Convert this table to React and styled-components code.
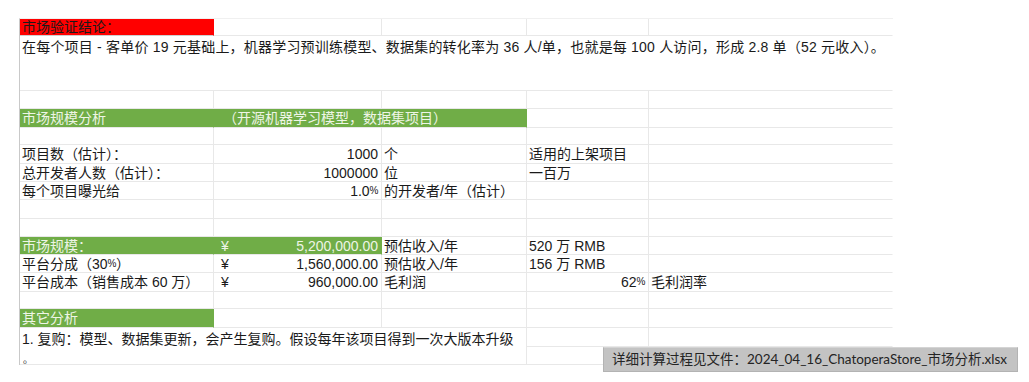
import React from "react";
import styled, { createGlobalStyle } from "styled-components";

const GlobalStyle = createGlobalStyle`
  html, body {
    margin: 0;
    padding: 0;
    background: #ffffff;
  }
  body {
    font-family: "Liberation Sans", "Noto Sans CJK SC", sans-serif;
  }
`;

const ROWS = [17, 55, 18, 19, 17, 19, 18, 18, 19, 18, 18, 18, 19, 17, 19, 19, 18];
const COLS = [194, 168, 145, 122, 244];

const fills = {
  red: "#ff0000",
  green: "#70ad47",
};

function App() {
  return (
    <>
      <GlobalStyle />
      <Page>
        <Sheet>
          {/* row 1 */}
          <Cell fill="red">市场验证结论：</Cell>
          <Cell />
          <Cell />
          <Cell />
          <Cell edge />

          {/* row 2 */}
          <Cell span={5} top edge spacing={0.2}>
            在每个项目 - 客单价 19 元基础上，机器学习预训练模型、数据集的转化率为 36 人/单，也就是每 100 人访问，形成 2.8 单（52 元收入）。
          </Cell>

          {/* row 3 */}
          <Cell />
          <Cell />
          <Cell />
          <Cell />
          <Cell edge />

          {/* row 4 */}
          <Cell fill="green">市场规模分析</Cell>
          <Cell fill="green" span={2} indent={9}>
            （开源机器学习模型，数据集项目）
          </Cell>
          <Cell />
          <Cell edge />

          {/* row 5 */}
          <Cell />
          <Cell />
          <Cell />
          <Cell />
          <Cell edge />

          {/* row 6 */}
          <Cell>项目数（估计）：</Cell>
          <Cell right>1000</Cell>
          <Cell>个</Cell>
          <Cell>适用的上架项目</Cell>
          <Cell edge />

          {/* row 7 */}
          <Cell>总开发者人数（估计）：</Cell>
          <Cell right>1000000</Cell>
          <Cell>位</Cell>
          <Cell>一百万</Cell>
          <Cell edge />

          {/* row 8 */}
          <Cell>每个项目曝光给</Cell>
          <Cell right>
            1.0<Pct>%</Pct>
          </Cell>
          <Cell>的开发者/年（估计）</Cell>
          <Cell />
          <Cell edge />

          {/* rows 9, 10 */}
          <Cell />
          <Cell />
          <Cell />
          <Cell />
          <Cell edge />
          <Cell />
          <Cell />
          <Cell />
          <Cell />
          <Cell edge />

          {/* row 11 */}
          <Cell fill="green">市场规模：</Cell>
          <Money fill="green">
            <span>¥</span>
            <span>5,200,000.00</span>
          </Money>
          <Cell>预估收入/年</Cell>
          <Cell>520 万 RMB</Cell>
          <Cell edge />

          {/* row 12 */}
          <Cell>
            平台分成（30<Pct>%</Pct>）
          </Cell>
          <Money>
            <span>¥</span>
            <span>1,560,000.00</span>
          </Money>
          <Cell>预估收入/年</Cell>
          <Cell>156 万 RMB</Cell>
          <Cell edge />

          {/* row 13 */}
          <Cell>平台成本（销售成本 60 万）</Cell>
          <Money>
            <span>¥</span>
            <span>960,000.00</span>
          </Money>
          <Cell>毛利润</Cell>
          <Cell right>
            62<Pct>%</Pct>
          </Cell>
          <Cell edge>毛利润率</Cell>

          {/* row 14 */}
          <Cell />
          <Cell />
          <Cell />
          <Cell />
          <Cell edge />

          {/* row 15 */}
          <Cell fill="green">其它分析</Cell>
          <Cell />
          <Cell />
          <Cell />
          <Cell edge />

          {/* rows 16-17, merged A:C */}
          <Cell span={3} rows={2} top>
            1. 复购：模型、数据集更新，会产生复购。假设每年该项目得到一次大版本升级
            <br />
            <Small>。</Small>
          </Cell>
          <Cell />
          <Cell edge />
          <Cell />
          <Cell edge />
        </Sheet>

        <Tip>详细计算过程见文件：2024_04_16_ChatoperaStore_市场分析.xlsx</Tip>
      </Page>
    </>
  );
}

export default App;

const Page = styled.div`
  position: relative;
  width: 1029px;
  height: 382px;
  padding: 19px 0 0 19px;
  box-sizing: border-box;
  overflow: hidden;
`;

const Sheet = styled.div`
  display: grid;
  grid-template-columns: ${COLS.map((c) => c + "px").join(" ")};
  grid-template-rows: ${ROWS.map((r) => r + "px").join(" ")};
  width: max-content;
  border-left: 1px solid #c9c9c9;
  border-top: 1px solid #f0f0f0;
  margin-top: -1px;
  font-size: 14px;
  color: #1a1a1a;
`;

const Cell = styled.div`
  grid-column: span ${(p) => p.span || 1};
  grid-row: span ${(p) => p.rows || 1};
  box-sizing: border-box;
  border-right: 1px solid
    ${(p) => (p.edge ? "transparent" : p.fill ? fills[p.fill] : "#e8e8e8")};
  border-bottom: 1px solid ${(p) => (p.fill === "red" ? "#cfcfcf" : "#e8e8e8")};
  background: ${(p) => (p.fill ? fills[p.fill] : "transparent")};
  color: ${(p) => (p.fill === "green" ? "#eef5e6" : "#1a1a1a")};
  display: flex;
  align-items: ${(p) => (p.top ? "flex-start" : "center")};
  ${(p) => (p.top ? "flex-direction: column;" : "")}
  justify-content: ${(p) => (p.right ? "flex-end" : "flex-start")};
  padding: ${(p) => (p.top ? "2px" : "0")} ${(p) => (p.right ? "3px" : "0")} 0
    ${(p) => (p.indent ? p.indent + "px" : "2px")};
  line-height: ${(p) => (p.rows ? "19px" : "18px")};
  letter-spacing: ${(p) => (p.spacing ? p.spacing + "px" : "normal")};
  white-space: nowrap;
  overflow: visible;
`;

const Money = styled(Cell)`
  justify-content: space-between;
  padding: 0 3px 0 7px;
`;

const Pct = styled.span`
  font-size: 10px;
  letter-spacing: -0.5px;
`;

const Small = styled.span`
  font-size: 10px;
  padding-left: 1px;
  line-height: 21px;
`;

const Tip = styled.div`
  position: absolute;
  left: 603px;
  top: 347px;
  width: 415px;
  height: 25px;
  box-sizing: border-box;
  background: #c3c3c3;
  border: 1px solid #b3b3b3;
  border-top-color: #d4d4d4;
  color: #242424;
  font-family: "Lato", "Noto Sans CJK SC", sans-serif;
  font-size: 13.5px;
  line-height: 23px;
  padding-left: 8px;
  white-space: nowrap;
`;
